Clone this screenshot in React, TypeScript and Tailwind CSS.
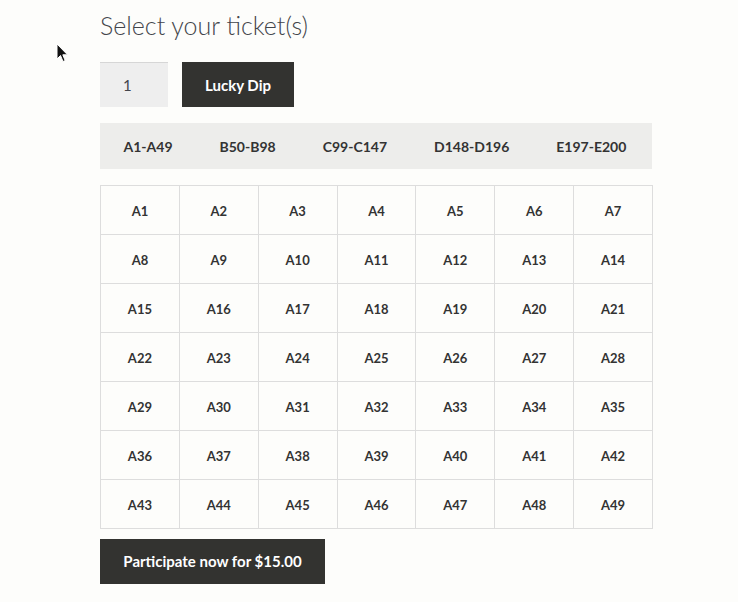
import React from 'react';

const tabs = ['A1-A49', 'B50-B98', 'C99-C147', 'D148-D196', 'E197-E200'];
const tickets = Array.from({ length: 49 }, (_, i) => `A${i + 1}`);

function Cursor() {
  return (
    <svg className="absolute left-[56px] top-[43px]" width="14" height="20" viewBox="0 0 14 20">
      <path d="M1 1 L1 16 L4.5 12.5 L7 18.5 L9.2 17.6 L6.8 11.8 L11.5 11.8 Z" fill="#111" stroke="#fff" strokeWidth="1" />
    </svg>
  );
}

export default function App() {
  return (
    <div className="relative min-h-[602px] w-[738px] bg-[#fdfdfb] font-['Lato',sans-serif] text-[#333333]">
      <Cursor />
      <div className="ml-[100px] w-[553px] pt-[8px]">
        <h2 className="text-[25px] font-light leading-[34px] text-[#43454b]">Select your ticket(s)</h2>

        <div className="mt-[20px] flex gap-[14px]">
          <div className="flex h-[45px] w-[68px] items-center border-t border-[#d6d6d6] bg-[#eeeeee] pl-[23px] text-[15px] text-[#43454b]">
            1
          </div>
          <button className="h-[45px] w-[112px] bg-[#333330] pt-[1px] text-[15px] font-bold text-white">Lucky Dip</button>
        </div>

        <div className="mt-[16px] flex h-[46px] w-[552px] items-center whitespace-nowrap bg-[#ededeb]">
          {tabs.map(t => (
            <span key={t} className="shrink-0 px-[23.5px] pt-[1px] text-[14px] font-bold text-[#333333]">{t}</span>
          ))}
        </div>

        <div className="mt-[16px] grid grid-cols-7 border-l border-t border-[#dddddd]">
          {tickets.map(t => (
            <div key={t} className="flex h-[49px] items-center justify-center border-b border-r border-[#dddddd] pt-[3px] text-[13px] font-bold text-[#333333]">
              {t}
            </div>
          ))}
        </div>

        <button className="mt-[10px] h-[45px] w-[225px] bg-[#333330] text-[15px] font-bold text-white">
          Participate now for $15.00
        </button>
      </div>
    </div>
  );
}
